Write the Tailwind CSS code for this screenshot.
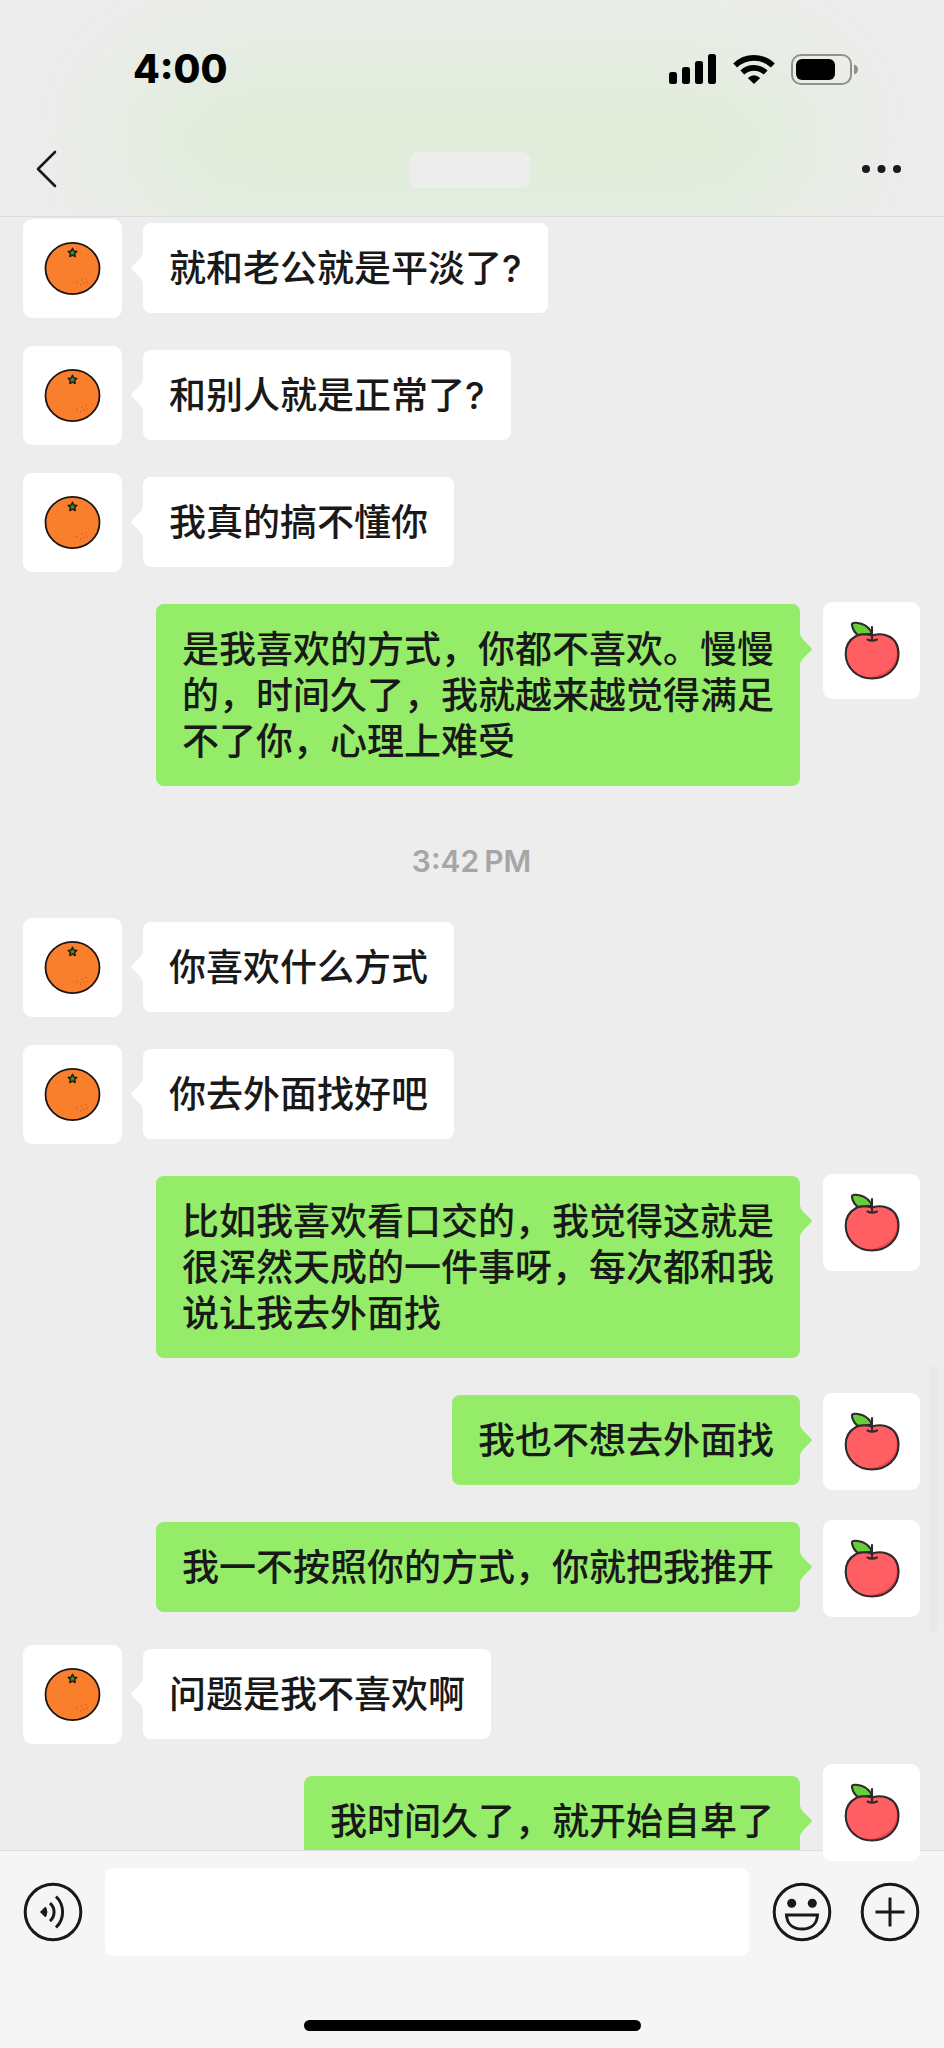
<!DOCTYPE html>
<html lang="zh-CN">
<head>
<meta charset="utf-8">
<meta name="viewport" content="width=device-width, initial-scale=1">
<title>Chat</title>
<script src="https://cdn.jsdelivr.net/npm/@tailwindcss/browser@4"></script>
</head>
<body class="flex h-screen flex-col overflow-hidden bg-[#ededed] font-['Inter','Noto_Sans_CJK_SC',sans-serif] text-[#191919]">

<!-- Shared avatar drawings and bubble tails -->
<svg class="hidden" aria-hidden="true">
  <symbol id="orange" viewBox="0 0 99 99">
    <ellipse cx="49.5" cy="49.500" rx="27" ry="25.6" fill="#fa7f2d" stroke="#1d1512" stroke-width="1.800"/>
    <path d="M49.5 29.300l1.3 2.7 3 .4-2.2 2.1.6 3-2.7-1.4-2.7 1.4.6-3-2.2-2.1 3-.4z" fill="#3d8b45" stroke="#1d2012" stroke-width="1.500" stroke-linejoin="round"/>
    <g fill="#c4551c"><circle cx="54" cy="63.500" r=".7"/><circle cx="59" cy="61" r=".7"/><circle cx="63" cy="59.500" r=".7"/><circle cx="57.500" cy="66" r=".7"/><circle cx="61" cy="64.500" r=".7"/><circle cx="64" cy="63" r=".7"/></g>
  </symbol>
  <symbol id="apple" viewBox="0 0 97 97">
    <path d="M49 33.500C42 31.500 37 31.500 33 34C26 38 22.500 44 22.700 52C23 66 34 76.500 49 76.500C64 76.500 75.500 66 75.500 52C75.500 44 72 37 65 34C60 31.500 55 31.800 49 33.500z" fill="#ff5e62"/>
    <path d="M73.500 44C76 62 66 72 46 75.500C66 79 77 64 75.500 50z" fill="#ef4448"/>
    <path d="M49 33.500C42 31.500 37 31.500 33 34C26 38 22.500 44 22.700 52C23 66 34 76.500 49 76.500C64 76.500 75.500 66 75.500 52C75.500 44 72 37 65 34C60 31.500 55 31.800 49 33.500z" fill="none" stroke="#2f2a2c" stroke-width="2.100"/>
    <path d="M48.500 32C48 27 42 21.500 33 20.800C29.500 20.600 28.500 21.500 29 23.500C30 28 32 31 35 33C39 31.800 43 32 48.500 32z" fill="#65cf38" stroke="#2f2a2c" stroke-width="2.100" stroke-linejoin="round"/>
    <path d="M49 25v13.500M44.500 37.500q4.500 2.500 9.500 0" fill="none" stroke="#2f2a2c" stroke-width="2.100" stroke-linecap="round"/>
  </symbol>
  <symbol id="tail" viewBox="0 0 12 30">
    <path d="M0 0C1 3 2 4.500 4 6.500L11 13.500Q12.500 15 11 16.500L4 23.500C2 25.500 1 27 0 30z" fill="currentColor"/>
  </symbol>
</svg>

<header class="relative z-10 flex shrink-0 flex-col overflow-hidden border-b border-[#dcdcdc] bg-[#ededed]">
  <div class="absolute inset-x-0 top-16 bottom-0 mx-auto w-3/4 rounded-full bg-[#d9ecce]/80 blur-3xl"></div>
  <div class="relative flex h-[138px] items-center justify-between pr-[85px] pl-[133px]">
    <div class="text-[39px] leading-[46px] font-extrabold text-black">4:00</div>
    <div class="flex items-center gap-4">
      <svg class="h-[30px] w-12" viewBox="0 0 48 30" aria-hidden="true"><rect x="0" y="18" width="8" height="12" rx="2.500"/><rect x="13" y="13" width="8" height="17" rx="2.500"/><rect x="26" y="7" width="8" height="23" rx="2.500"/><rect x="39" y="0" width="8" height="30" rx="2.500"/></svg>
      <svg class="h-[30px] w-[42px]" viewBox="0 0 42 30" aria-hidden="true"><g fill="none" stroke="#000" stroke-width="5.600"><path d="M2.200 11.500A27 27 0 0 1 39.800 11.500"/><path d="M9.300 18.500A17 17 0 0 1 32.700 18.500"/></g><path d="M14.800 24Q21 18.500 27.200 24L21 30z"/></svg>
      <svg class="h-[31px] w-[68px]" viewBox="0 0 68 31" aria-hidden="true"><rect x="1" y="1" width="59" height="29" rx="9" fill="none" stroke="#8f918e" stroke-width="2"/><rect x="5" y="5" width="39" height="21" rx="6"/><path d="M63 10.500C65.500 11 67 13 67 15.500S65.500 20 63 20.500z" fill="#8f918e"/></svg>
    </div>
  </div>
  <div class="relative grid h-[78px] grid-cols-[1fr_auto_1fr] items-start pr-10 pl-[35px]">
    <button type="button" aria-label="返回" class="flex h-[62px] items-center justify-self-start"><svg class="h-10 w-6" viewBox="0 0 24 40" fill="none" stroke="#191919" stroke-width="2.600" stroke-linecap="round" stroke-linejoin="round"><path d="M20 3L3 20L20 37"/></svg></button>
    <div class="mt-3.5 h-9 w-[120px] rounded-lg bg-[#ededed]"></div>
    <button type="button" aria-label="更多" class="flex h-[62px] items-center justify-self-end"><svg class="h-2.5 w-11" viewBox="0 0 44 10" fill="#191919"><circle cx="6" cy="5" r="4"/><circle cx="21.500" cy="5" r="4"/><circle cx="37" cy="5" r="4"/></svg></button>
  </div>
</header>

<main class="relative flex min-h-0 flex-1 flex-col gap-7 pt-0.5 pr-6 pl-[23px] text-[37px] leading-[46px] font-medium">
  <div class="flex shrink-0 items-start gap-[21px]">
    <svg role="img" aria-label="橙子" class="size-[99px] shrink-0 rounded-[9px] bg-white"><use href="#orange"/></svg>
    <div class="relative mt-1 mb-[5px] max-w-[644px] rounded-lg bg-white px-[26px] pt-[23px] pb-[21px]"><svg class="absolute top-[30px] right-full h-[30px] w-3 rotate-180 text-white" aria-hidden="true"><use href="#tail"/></svg><p>就和老公就是平淡了?</p></div>
  </div>
  <div class="flex shrink-0 items-start gap-[21px]">
    <svg role="img" aria-label="橙子" class="size-[99px] shrink-0 rounded-[9px] bg-white"><use href="#orange"/></svg>
    <div class="relative mt-1 mb-[5px] max-w-[644px] rounded-lg bg-white px-[26px] pt-[23px] pb-[21px]"><svg class="absolute top-[30px] right-full h-[30px] w-3 rotate-180 text-white" aria-hidden="true"><use href="#tail"/></svg><p>和别人就是正常了?</p></div>
  </div>
  <div class="flex shrink-0 items-start gap-[21px]">
    <svg role="img" aria-label="橙子" class="size-[99px] shrink-0 rounded-[9px] bg-white"><use href="#orange"/></svg>
    <div class="relative mt-1 mb-[5px] max-w-[644px] rounded-lg bg-white px-[26px] pt-[23px] pb-[21px]"><svg class="absolute top-[30px] right-full h-[30px] w-3 rotate-180 text-white" aria-hidden="true"><use href="#tail"/></svg><p>我真的搞不懂你</p></div>
  </div>
  <div class="flex shrink-0 flex-row-reverse items-start gap-[23px]">
    <svg role="img" aria-label="苹果" class="mt-0.5 size-[97px] shrink-0 rounded-[9px] bg-white"><use href="#apple"/></svg>
    <div class="relative mt-1 mb-[5px] max-w-[644px] rounded-lg bg-[#95ec69] px-[26px] pt-[23px] pb-[21px]"><svg class="absolute top-[30px] left-full h-[30px] w-3 text-[#95ec69]" aria-hidden="true"><use href="#tail"/></svg><p>是我喜欢的方式，你都不喜欢。慢慢的，时间久了，我就越来越觉得满足不了你，心理上难受</p></div>
  </div>

  <time class="-my-7 shrink-0 pt-12 pb-[35px] text-center text-[30px] leading-[44px] font-semibold text-[#a6a6a6]">3:42&thinsp;PM</time>

  <div class="flex shrink-0 items-start gap-[21px]">
    <svg role="img" aria-label="橙子" class="size-[99px] shrink-0 rounded-[9px] bg-white"><use href="#orange"/></svg>
    <div class="relative mt-1 mb-[5px] max-w-[644px] rounded-lg bg-white px-[26px] pt-[23px] pb-[21px]"><svg class="absolute top-[30px] right-full h-[30px] w-3 rotate-180 text-white" aria-hidden="true"><use href="#tail"/></svg><p>你喜欢什么方式</p></div>
  </div>
  <div class="flex shrink-0 items-start gap-[21px]">
    <svg role="img" aria-label="橙子" class="size-[99px] shrink-0 rounded-[9px] bg-white"><use href="#orange"/></svg>
    <div class="relative mt-1 mb-[5px] max-w-[644px] rounded-lg bg-white px-[26px] pt-[23px] pb-[21px]"><svg class="absolute top-[30px] right-full h-[30px] w-3 rotate-180 text-white" aria-hidden="true"><use href="#tail"/></svg><p>你去外面找好吧</p></div>
  </div>
  <div class="flex shrink-0 flex-row-reverse items-start gap-[23px]">
    <svg role="img" aria-label="苹果" class="mt-0.5 size-[97px] shrink-0 rounded-[9px] bg-white"><use href="#apple"/></svg>
    <div class="relative mt-1 mb-[5px] max-w-[644px] rounded-lg bg-[#95ec69] px-[26px] pt-[23px] pb-[21px]"><svg class="absolute top-[30px] left-full h-[30px] w-3 text-[#95ec69]" aria-hidden="true"><use href="#tail"/></svg><p>比如我喜欢看口交的，我觉得这就是很浑然天成的一件事呀，每次都和我说让我去外面找</p></div>
  </div>
  <div class="flex shrink-0 flex-row-reverse items-start gap-[23px]">
    <svg role="img" aria-label="苹果" class="mt-0.5 size-[97px] shrink-0 rounded-[9px] bg-white"><use href="#apple"/></svg>
    <div class="relative mt-1 mb-[5px] max-w-[644px] rounded-lg bg-[#95ec69] px-[26px] pt-[23px] pb-[21px]"><svg class="absolute top-[30px] left-full h-[30px] w-3 text-[#95ec69]" aria-hidden="true"><use href="#tail"/></svg><p>我也不想去外面找</p></div>
  </div>
  <div class="flex shrink-0 flex-row-reverse items-start gap-[23px]">
    <svg role="img" aria-label="苹果" class="mt-0.5 size-[97px] shrink-0 rounded-[9px] bg-white"><use href="#apple"/></svg>
    <div class="relative mt-1 mb-[5px] max-w-[644px] rounded-lg bg-[#95ec69] px-[26px] pt-[23px] pb-[21px]"><svg class="absolute top-[30px] left-full h-[30px] w-3 text-[#95ec69]" aria-hidden="true"><use href="#tail"/></svg><p>我一不按照你的方式，你就把我推开</p></div>
  </div>
  <div class="flex shrink-0 items-start gap-[21px]">
    <svg role="img" aria-label="橙子" class="size-[99px] shrink-0 rounded-[9px] bg-white"><use href="#orange"/></svg>
    <div class="relative mt-1 mb-[5px] max-w-[644px] rounded-lg bg-white px-[26px] pt-[23px] pb-[21px]"><svg class="absolute top-[30px] right-full h-[30px] w-3 rotate-180 text-white" aria-hidden="true"><use href="#tail"/></svg><p>问题是我不喜欢啊</p></div>
  </div>
  <!-- The newest avatar floats over the input bar -->
  <div class="flex shrink-0 flex-row-reverse items-start gap-[23px]">
    <svg role="img" aria-label="苹果" class="relative z-20 -mt-2 size-[97px] shrink-0 rounded-[9px] bg-white"><use href="#apple"/></svg>
    <div class="relative mt-1 mb-[5px] max-w-[644px] rounded-lg bg-[#95ec69] px-[26px] pt-[23px] pb-[21px]"><svg class="absolute top-[30px] left-full h-[30px] w-3 text-[#95ec69]" aria-hidden="true"><use href="#tail"/></svg><p>我时间久了，就开始自卑了</p></div>
  </div>
  <div class="absolute right-1.5 bottom-[218px] h-[266px] w-2 rounded-full bg-[#e8e8e8]"></div>
</main>

<footer class="relative z-10 shrink-0 border-t border-[#dedede] bg-[#f5f5f5] pt-[17px] pb-[17px]">
  <form class="flex items-center pr-6 pl-[23px]">
    <button type="button" aria-label="语音" class="shrink-0"><svg class="size-[60px]" viewBox="0 0 60 60" fill="none" stroke="#191919" stroke-width="3"><circle cx="30" cy="30" r="27.800"/><path d="M17.500 30L22.500 25Q25.500 30 22.500 35z" fill="#191919" stroke-width="1"/><path d="M27 21A12 12 0 0 1 27 39M33 14.500A21.500 21.500 0 0 1 33 45.500"/></svg></button>
    <input type="text" aria-label="消息" class="mr-[23px] ml-[22px] h-[88px] min-w-0 flex-1 rounded-lg bg-white px-6 text-[37px] outline-none">
    <button type="button" aria-label="表情" class="mr-7 shrink-0"><svg class="size-[60px]" viewBox="0 0 60 60" fill="none" stroke="#191919" stroke-width="3"><circle cx="30" cy="30" r="27.800"/><g fill="#191919" stroke="none"><circle cx="19.700" cy="21.300" r="4.500"/><circle cx="40.300" cy="21.300" r="4.500"/></g><path d="M14.500 33H45.500C45 42 39 47 30 47S15 42 14.500 33z"/></svg></button>
    <button type="button" aria-label="更多功能" class="shrink-0"><svg class="size-[60px]" viewBox="0 0 60 60" fill="none" stroke="#191919" stroke-width="3"><circle cx="30" cy="30" r="27.800"/><path d="M15.500 30H44.500M30 15.500V44.500"/></svg></button>
  </form>
  <div class="mx-auto mt-16 h-[11px] w-[337px] rounded-full bg-black"></div>
</footer>
</body>
</html>
